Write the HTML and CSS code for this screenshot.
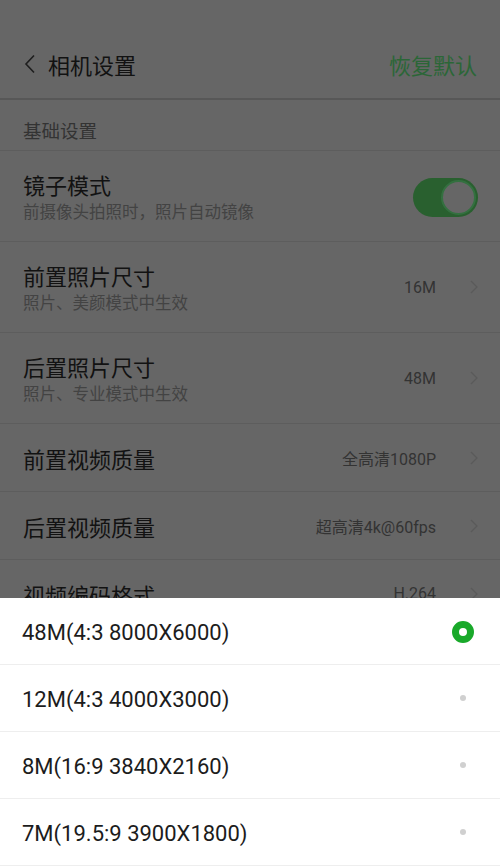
FILE: index.html
```html
<!DOCTYPE html>
<html lang="zh-CN">
<head>
<meta charset="utf-8">
<title>相机设置</title>
<link rel="stylesheet" href="styles.css">
</head>
<body>
<div class="screen">
  <div class="page">
    <header class="topbar">
      <div class="topbar-left">
        <svg class="back" width="12" height="20" viewBox="0 0 12 20"><path d="M10 1.5 L2 10 L10 18.5" fill="none" stroke="#1e1e1e" stroke-width="1.6"/></svg>
        <span class="title">相机设置</span>
      </div>
      <span class="reset">恢复默认</span>
    </header>

    <div class="section">基础设置</div>

    <div class="row tall">
      <div class="texts">
        <div class="label">镜子模式</div>
        <div class="sub">前摄像头拍照时，照片自动镜像</div>
      </div>
      <div class="toggle"><span class="knob"></span></div>
    </div>

    <div class="row tall">
      <div class="texts">
        <div class="label">前置照片尺寸</div>
        <div class="sub">照片、美颜模式中生效</div>
      </div>
      <div class="value">16M</div>
      <svg class="chev" width="8" height="14" viewBox="0 0 8 14"><path d="M1 1 L7 7 L1 13" fill="none" stroke="#5a5a5a" stroke-width="1.3"/></svg>
    </div>

    <div class="row tall">
      <div class="texts">
        <div class="label">后置照片尺寸</div>
        <div class="sub">照片、专业模式中生效</div>
      </div>
      <div class="value">48M</div>
      <svg class="chev" width="8" height="14" viewBox="0 0 8 14"><path d="M1 1 L7 7 L1 13" fill="none" stroke="#5a5a5a" stroke-width="1.3"/></svg>
    </div>

    <div class="row short">
      <div class="texts"><div class="label">前置视频质量</div></div>
      <div class="value">全高清1080P</div>
      <svg class="chev" width="8" height="14" viewBox="0 0 8 14"><path d="M1 1 L7 7 L1 13" fill="none" stroke="#5a5a5a" stroke-width="1.3"/></svg>
    </div>

    <div class="row short">
      <div class="texts"><div class="label">后置视频质量</div></div>
      <div class="value">超高清4k@60fps</div>
      <svg class="chev" width="8" height="14" viewBox="0 0 8 14"><path d="M1 1 L7 7 L1 13" fill="none" stroke="#5a5a5a" stroke-width="1.3"/></svg>
    </div>

    <div class="row short">
      <div class="texts"><div class="label">视频编码格式</div></div>
      <div class="value">H.264</div>
      <svg class="chev" width="8" height="14" viewBox="0 0 8 14"><path d="M1 1 L7 7 L1 13" fill="none" stroke="#5a5a5a" stroke-width="1.3"/></svg>
    </div>
  </div>

  <div class="sheet">
    <div class="option"><span class="opt-text">48M(4:3 8000X6000)</span><span class="radio on"></span></div>
    <div class="option"><span class="opt-text">12M(4:3 4000X3000)</span><span class="radio"></span></div>
    <div class="option"><span class="opt-text">8M(16:9 3840X2160)</span><span class="radio"></span></div>
    <div class="option"><span class="opt-text">7M(19.5:9 3900X1800)</span><span class="radio"></span></div>
  </div>
</div>
</body>
</html>
```

FILE: styles.css
```css
* { box-sizing: border-box; }
html, body {
  margin: 0;
  padding: 0;
  width: 500px;
  height: 867px;
  overflow: hidden;
  background: #666666;
  font-family: "Noto Sans CJK SC", "Noto Sans", Roboto, sans-serif;
}
.screen {
  position: relative;
  width: 500px;
  height: 867px;
  overflow: hidden;
}
.page {
  display: flex;
  flex-direction: column;
  background: #666666;
}
.topbar {
  height: 100px;
  padding: 29px 23px 0 24px;
  display: flex;
  align-items: center;
  justify-content: space-between;
  border-bottom: 2px solid #575757;
}
.topbar-left {
  display: flex;
  align-items: center;
  gap: 12px;
}
.back { display: block; margin-top: 1px; }
.title {
  font-size: 22px;
  color: #121212;
  line-height: 1;
}
.reset {
  font-size: 22px;
  color: #2b6637;
  line-height: 1;
}
.section {
  height: 51px;
  padding: 20px 23px 0;
  font-size: 18.5px;
  line-height: 20px;
  color: #333333;
  border-bottom: 1px solid #5d5d5d;
}
.row {
  display: flex;
  align-items: center;
  padding: 0 22px 0 23px;
  border-bottom: 1px solid #5d5d5d;
}
.row.tall { height: 91px; }
.row.short { height: 68px; }
.texts {
  flex: 1;
  display: flex;
  flex-direction: column;
}
.label {
  font-size: 22px;
  line-height: 28px;
  color: #121212;
}
.row.tall .texts { margin-top: 2px; }
.sub {
  font-size: 16.5px;
  line-height: 26px;
  color: #434343;
}
.value {
  font-family: Roboto, "Noto Sans CJK SC", sans-serif;
  font-size: 16px;
  color: #333333;
  margin-right: 34px;
}
.chev { display: block; margin-right: 0; }
.toggle {
  width: 65px;
  height: 39px;
  border-radius: 20px;
  background: #29602f;
  display: flex;
  align-items: center;
  justify-content: flex-end;
  padding-right: 2px;
  margin-top: 2px;
}
.knob {
  width: 35px;
  height: 35px;
  border-radius: 50%;
  background: #666666;
  border: 2px solid #347040;
}
.sheet {
  position: absolute;
  left: 0;
  right: 0;
  top: 598px;
  bottom: 0;
  background: #ffffff;
  display: flex;
  flex-direction: column;
}
.option {
  height: 67px;
  flex: none;
  display: flex;
  align-items: center;
  justify-content: space-between;
  padding: 0 26px 0 22px;
  border-bottom: 1px solid #eeeeee;
}
.opt-text {
  font-family: Roboto, "Noto Sans", sans-serif;
  font-size: 22px;
  color: #1c1c1c;
  margin-top: 2px;
}
.radio {
  width: 6px;
  height: 6px;
  margin-right: 8px;
  border-radius: 50%;
  background: #d0d0d0;
}
.radio.on {
  width: 22px;
  height: 22px;
  margin-right: 0;
  margin-top: 2px;
  background: #ffffff;
  border: 7px solid #19a92a;
}
```
